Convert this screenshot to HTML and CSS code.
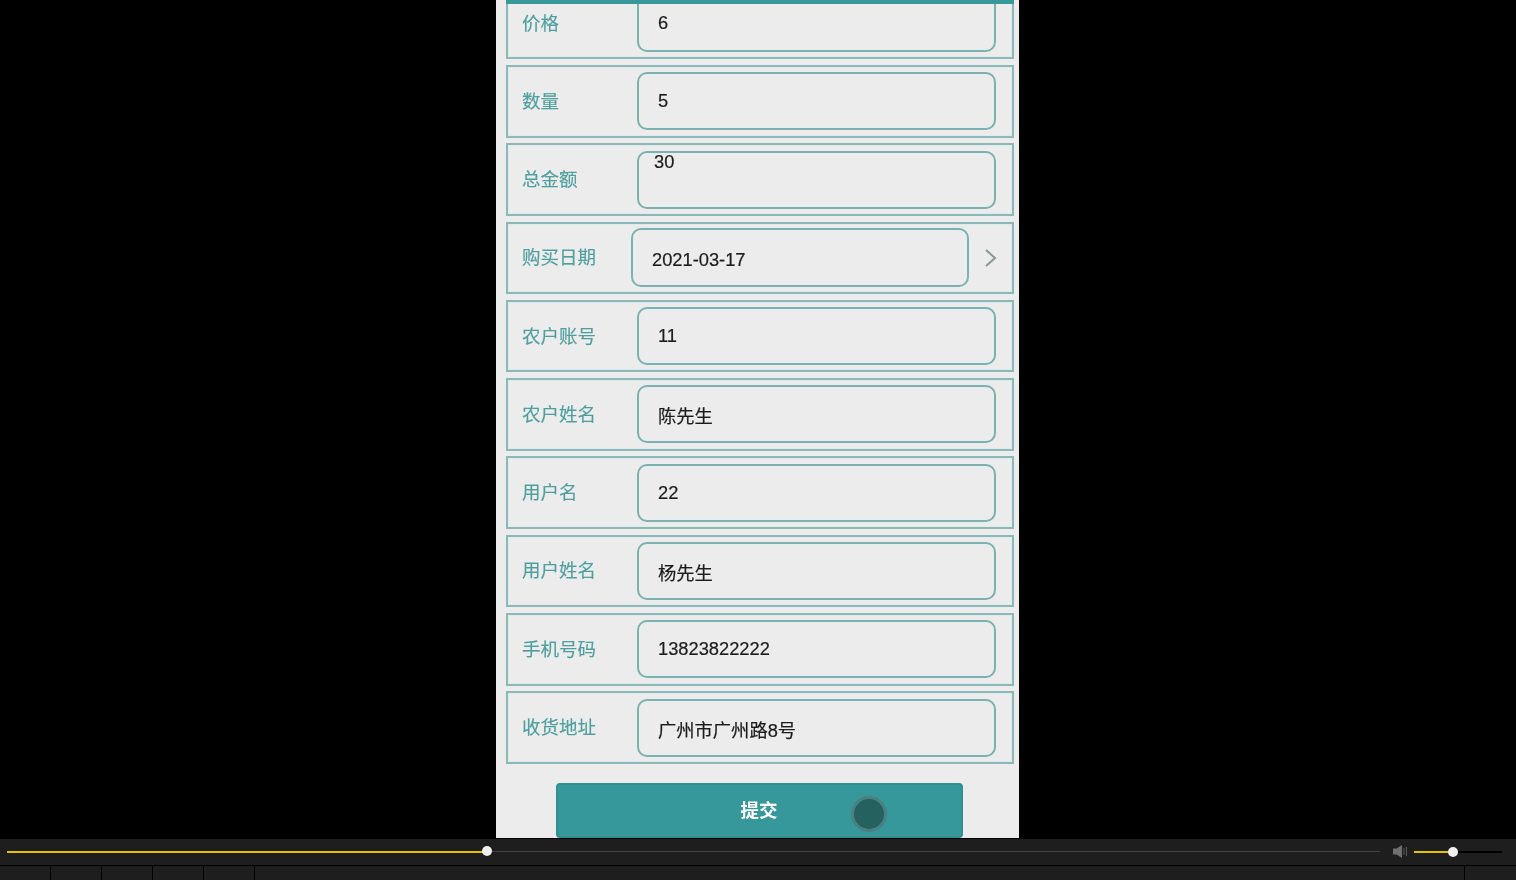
FILE: index.html
```html
<!DOCTYPE html>
<html lang="zh-CN">
<head>
  <meta charset="UTF-8">
  <title>订单详情</title>
  <link rel="stylesheet" href="styles.css">
</head>
<body>
  <div class="stage">
    <div class="phone">
      <div class="top-line"></div>
      <div class="form">
        <div class="row"><div class="label">价格</div><div class="field">6</div></div>
        <div class="row"><div class="label">数量</div><div class="field">5</div></div>
        <div class="row"><div class="label">总金额</div><div class="field field-top">30</div></div>
        <div class="row row-date">
          <div class="label">购买日期</div>
          <div class="field field-date"><span class="date">2021-03-17</span></div>
          <svg class="chevron" width="14" height="20" viewBox="0 0 14 20"><path d="M2 2l9 8-9 8" fill="none" stroke="#8b9696" stroke-width="2"/></svg>
        </div>
        <div class="row"><div class="label">农户账号</div><div class="field">11</div></div>
        <div class="row"><div class="label">农户姓名</div><div class="field"><span class="low">陈先生</span></div></div>
        <div class="row"><div class="label">用户名</div><div class="field">22</div></div>
        <div class="row"><div class="label">用户姓名</div><div class="field"><span class="low">杨先生</span></div></div>
        <div class="row"><div class="label">手机号码</div><div class="field">13823822222</div></div>
        <div class="row"><div class="label">收货地址</div><div class="field"><span class="low">广州市广州路8号</span></div></div>
        <div class="submit">提交</div>
      </div>
      <div class="touch"></div>
    </div>
  </div>

  <div class="player">
    <div class="controls">
      <div class="progress"><div class="progress-done"></div><div class="knob"></div></div>
      <svg class="speaker" width="15" height="13" viewBox="0 0 15 13">
        <path d="M0 3.500h3.500L9 0v13L3.500 9.500H0z" fill="#6f6f6f"/>
        <path d="M11 3v7M13.500 2v9" stroke="#5a5a5a" stroke-width="1" fill="none"/>
      </svg>
      <div class="volume"><div class="volume-done"></div><div class="knob"></div></div>
    </div>
    <div class="tabs">
      <div class="tab"></div>
      <div class="tab"></div>
      <div class="tab"></div>
      <div class="tab"></div>
      <div class="tab"></div>
      <div class="tab tab-fill"></div>
      <div class="tab tab-end"></div>
    </div>
  </div>
</body>
</html>
```

FILE: styles.css
```css
* {
  box-sizing: border-box;
}
html, body {
  height: 880px;
  overflow: hidden;
}
body {
  margin: 0;
  background: #000;
  font-family: "Liberation Sans", "Noto Sans CJK SC", sans-serif;
}
.stage {
  height: 838px;
  padding-left: 496px;
}
.phone {
  position: relative;
  width: 523px;
  height: 838px;
  overflow: hidden;
  background: #ececec;
  filter: blur(0.4px);
}
.top-line {
  position: absolute;
  top: 0;
  left: 10px;
  right: 5px;
  height: 4px;
  background: #36989a;
  z-index: 2;
}
.form {
  display: flex;
  flex-direction: column;
  gap: 5.7px;
  margin-top: -13.3px;
  padding: 0 5px 0 10px;
}
.row {
  flex: none;
  display: flex;
  align-items: center;
  height: 72.6px;
  padding-left: 14px;
  border: 2px solid #8db8b8;
  box-shadow: inset 0 0 0 1px #dcecec;
}
.label {
  flex: none;
  width: 115px;
  padding-bottom: 3px;
  font-size: 18.5px;
  color: #4f9f9f;
  -webkit-text-stroke: 0.15px #4f9f9f;
}
.field {
  flex: none;
  display: flex;
  align-items: center;
  width: 359px;
  height: 58px;
  padding-left: 19px;
  border: 2px solid #7fb0b0;
  border-radius: 10px;
  box-shadow: inset 0 0 0 1px #e2f0f0;
  font-size: 18.3px;
  color: #1c1c1c;
  -webkit-text-stroke: 0.2px #1c1c1c;
}
.field-top {
  align-items: flex-start;
  padding-left: 15px;
  line-height: 17px;
}
.row-date .label {
  width: 109px;
}
.field-date {
  width: 338px;
  height: 59px;
}
.date {
  position: relative;
  top: 2px;
}
.low {
  position: relative;
  top: 1px;
}
.chevron {
  flex: none;
  margin-left: 15px;
}
.submit {
  flex: none;
  align-self: center;
  width: 407px;
  height: 55px;
  margin-top: 13px;
  margin-right: 2px;
  border: 2px solid #2f8f91;
  border-radius: 4px;
  background: #36989a;
  color: #fff;
  font-size: 18.5px;
  font-weight: bold;
  line-height: 52px;
  text-align: center;
}
.touch {
  position: absolute;
  left: 355px;
  top: 796px;
  width: 36px;
  height: 36px;
  border: 3px solid #4b8082;
  border-radius: 50%;
  background: #24615f;
}
.player {
  height: 42px;
  background: #000;
}
.controls {
  display: flex;
  align-items: center;
  height: 26px;
  margin-top: 1px;
  padding: 0 14px 1px 7px;
  background: #1e1e1e;
}
.progress {
  position: relative;
  flex: none;
  width: 1373px;
  height: 1px;
  background: #444;
}
.progress-done {
  position: absolute;
  left: 0;
  top: 0;
  width: 480px;
  height: 2px;
  background: #e2c400;
}
.progress .knob {
  left: 475px;
}
.knob {
  position: absolute;
  top: -5px;
  width: 10px;
  height: 10px;
  border-radius: 50%;
  background: #f0f0f0;
}
.speaker {
  flex: none;
  margin-left: 13px;
}
.volume {
  position: relative;
  flex: none;
  width: 88px;
  height: 2px;
  margin-left: 6px;
  background: #000;
}
.volume-done {
  width: 39px;
  height: 2px;
  background: #e2c400;
}
.volume .knob {
  left: 34px;
  top: -4px;
}
.tabs {
  display: flex;
  height: 14px;
  margin-top: 1px;
  background: #1e1e1e;
}
.tab {
  flex: none;
  width: 51px;
  border-right: 1px solid #000;
}
.tab-fill {
  flex: 1;
}
.tab-end {
  border-right: 0;
}
```
